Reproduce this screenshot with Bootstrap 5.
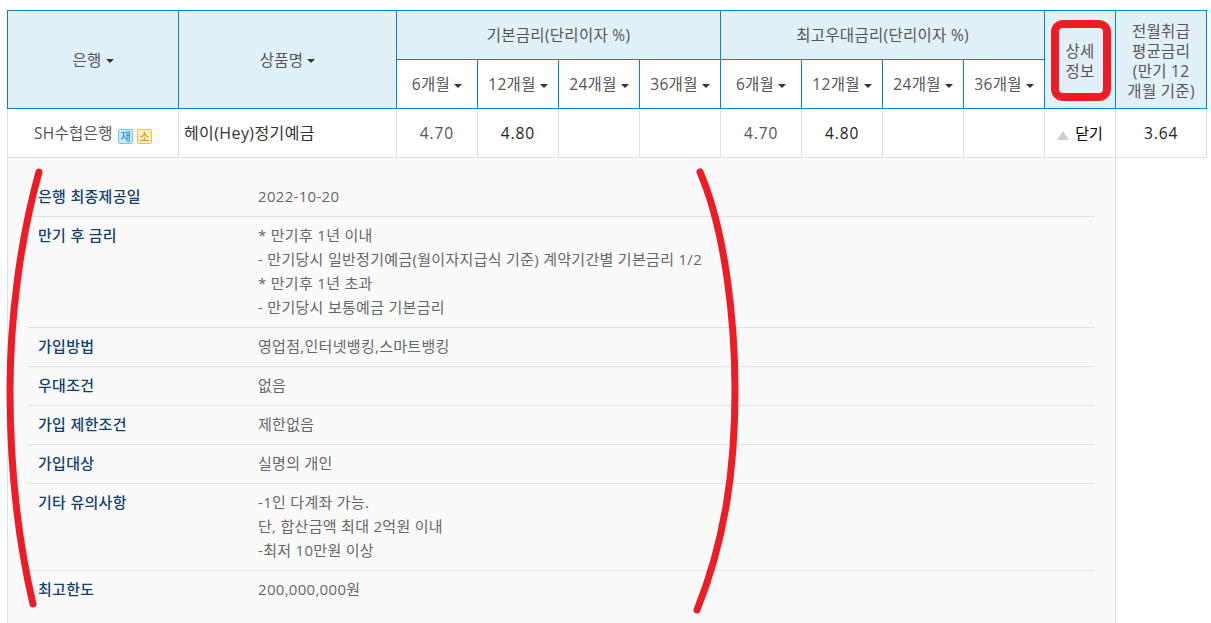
<!DOCTYPE html>
<html lang="ko">
<head>
<meta charset="utf-8">
<title>상품 상세</title>
<link href="https://cdn.jsdelivr.net/npm/bootstrap@5.3.0/dist/css/bootstrap.min.css" rel="stylesheet">
<style>
html,body{height:623px;overflow:hidden;background:#fff}
body{font-family:"Open Sans","Noto Sans CJK KR",sans-serif;font-size:15.5px;letter-spacing:.3px;position:relative}
.page-wrap{padding:10px 4px 0 7px}
.rate-table{table-layout:fixed;border-collapse:collapse;width:1200px;margin:0}
.rate-table th,.rate-table td{text-align:center;vertical-align:middle;padding:0;font-weight:400;line-height:24px}
.rate-table thead th{border:1px solid #0085d0;background:#e2f0f7;color:#555}
.rate-table thead th.sub{background:#fff}
.rate-table thead th.tight-head{line-height:20px;padding-top:3px}
.r1{height:49px}.r2{height:49px}.r3{height:49px}
.rate-table tbody td{border:1px solid #e0e0e0;color:#555}
.rate-table td.num-val{letter-spacing:.9px}
.rate-table td.strong-val{color:#222;font-weight:500;letter-spacing:.9px}
.rate-table td.left-cell{text-align:left;padding-left:5px;color:#333;font-size:16px;letter-spacing:.4px}
.caret-dn{display:inline-block;width:0;height:0;border:4px solid transparent;border-top:4px solid #333;border-bottom:0;margin-left:4px;vertical-align:middle}
.tag-box{display:inline-flex;align-items:center;justify-content:center;width:15px;height:15px;border-radius:2px;font-size:11px;letter-spacing:0;line-height:1;vertical-align:-2px;margin-left:1px}
.tag-a{background:#c5ecf9;border:1px solid #6fcbee;color:#2277bb}
.tag-b{background:#fff0c0;border:1px solid #f5c330;color:#d9722a;margin-left:4px}
.rate-table td.close-link{color:#000;font-size:15px;letter-spacing:0}
.tri-up{display:inline-block;width:0;height:0;border:6px solid transparent;border-bottom:9px solid #d0d0d0;border-top:0;margin-right:6px;vertical-align:-1px}
.rate-table td.detail-cell{background:#fafafa;border-right:1px solid #e0e0e0;border-bottom:0;padding:20px 20px 40px 20px;text-align:left;vertical-align:top}
.rate-table td.blank-cell{border:0;background:#fff}
.info-table{width:1067px;table-layout:fixed;border-collapse:collapse;margin:0}
.info-table th,.info-table td{text-align:left;vertical-align:top;padding:6px 10px 8px;line-height:24px;background:transparent;font-size:15px}
.info-table tr+tr th,.info-table tr+tr td{border-top:1px solid #e0e0e0}
.info-table th{width:220px;color:#123f6d}
.rate-table .info-table th{font-weight:500}
.rate-table .info-table td{border:0;color:#666}
.rate-table .info-table tr+tr td{border-top:1px solid #e0e0e0}
.mark-layer{position:absolute;left:0;top:0;width:1211px;height:623px;pointer-events:none}
</style>
</head>
<body>
<div class="page-wrap">
<table class="rate-table">
<colgroup>
<col style="width:171px"><col style="width:218px">
<col style="width:81px"><col style="width:81px"><col style="width:81px"><col style="width:81px">
<col style="width:81px"><col style="width:81px"><col style="width:81px"><col style="width:81px">
<col style="width:71px"><col style="width:91px">
</colgroup>
<thead>
<tr class="r1">
<th rowspan="2">은행<span class="caret-dn"></span></th>
<th rowspan="2">상품명<span class="caret-dn"></span></th>
<th colspan="4">기본금리(단리이자 %)</th>
<th colspan="4">최고우대금리(단리이자 %)</th>
<th rowspan="2" class="tight-head">상세<br>정보</th>
<th rowspan="2" class="tight-head">전월취급<br>평균금리<br>(만기 12<br>개월 기준)</th>
</tr>
<tr class="r2">
<th class="sub">6개월<span class="caret-dn"></span></th>
<th class="sub">12개월<span class="caret-dn"></span></th>
<th class="sub">24개월<span class="caret-dn"></span></th>
<th class="sub">36개월<span class="caret-dn"></span></th>
<th class="sub">6개월<span class="caret-dn"></span></th>
<th class="sub">12개월<span class="caret-dn"></span></th>
<th class="sub">24개월<span class="caret-dn"></span></th>
<th class="sub">36개월<span class="caret-dn"></span></th>
</tr>
</thead>
<tbody>
<tr class="r3">
<td>SH수협은행 <span class="tag-box tag-a">재</span><span class="tag-box tag-b">소</span></td>
<td class="left-cell">헤이(Hey)정기예금</td>
<td class="num-val">4.70</td><td class="strong-val">4.80</td><td></td><td></td>
<td class="num-val">4.70</td><td class="strong-val">4.80</td><td></td><td></td>
<td class="close-link"><span class="tri-up"></span>닫기</td>
<td class="strong-val">3.64</td>
</tr>
<tr>
<td colspan="11" class="detail-cell">
<table class="info-table">
<tr><th>은행 최종제공일</th><td>2022-10-20</td></tr>
<tr><th>만기 후 금리</th><td>* 만기후 1년 이내<br>- 만기당시 일반정기예금(월이자지급식 기준) 계약기간별 기본금리 1/2<br>* 만기후 1년 초과<br>- 만기당시 보통예금 기본금리</td></tr>
<tr><th>가입방법</th><td>영업점,인터넷뱅킹,스마트뱅킹</td></tr>
<tr><th>우대조건</th><td>없음</td></tr>
<tr><th>가입 제한조건</th><td>제한없음</td></tr>
<tr><th>가입대상</th><td>실명의 개인</td></tr>
<tr><th>기타 유의사항</th><td>-1인 다계좌 가능.<br>단, 합산금액 최대 2억원 이내<br>-최저 10만원 이상</td></tr>
<tr><th>최고한도</th><td>200,000,000원</td></tr>
</table>
</td>
<td class="blank-cell"></td>
</tr>
</tbody>
</table>
</div>
<svg class="mark-layer" viewBox="0 0 1211 623" fill="none" stroke="#ee1c25" stroke-linecap="round">
<rect x="1055" y="24" width="52" height="73" rx="8" stroke-width="8"/>
<path d="M39 172C20 240 10 320 10 390C10 470 18 540 33 604" stroke-width="7"/>
<path d="M700 172C725 230 735 320 735 390C735 470 725 540 697 610" stroke-width="7"/>
</svg>
</body>
</html>
